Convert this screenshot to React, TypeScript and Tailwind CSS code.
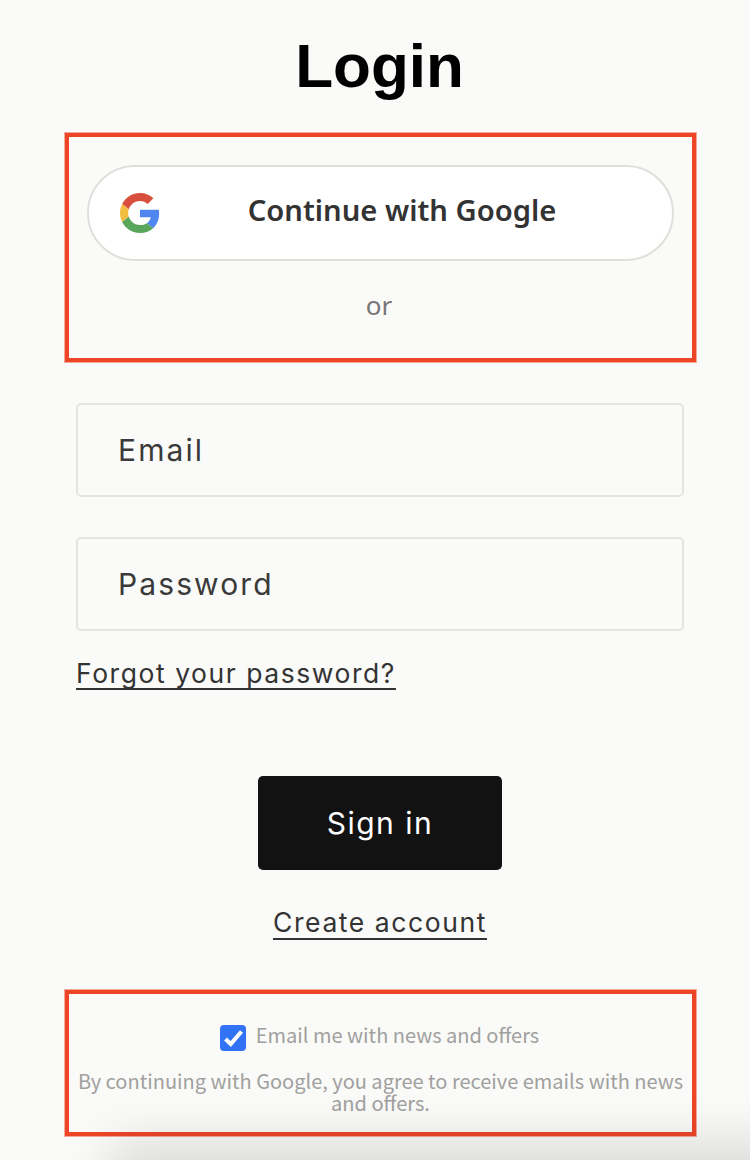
function GoogleLogo() {
  return (
    <svg width="40" height="40" viewBox="0 0 48 48" className="shrink-0">
      <path fill="#D94F3D" d="M24 9.5c3.54 0 6.71 1.22 9.21 3.6l6.85-6.85C35.9 2.38 30.47 0 24 0 14.62 0 6.51 5.38 2.56 13.22l7.98 6.19C12.43 13.72 17.74 9.5 24 9.5z" />
      <path fill="#5086F0" d="M46.98 24.55c0-1.57-.15-3.09-.38-4.55H24v9.02h12.94c-.58 2.96-2.26 5.48-4.78 7.18l7.73 6c4.51-4.18 7.09-10.36 7.09-17.65z" />
      <path fill="#F2BE42" d="M10.53 28.59c-.48-1.45-.76-2.99-.76-4.59s.27-3.14.76-4.59l-7.98-6.19C.92 16.46 0 20.12 0 24c0 3.88.92 7.54 2.56 10.78l7.97-6.19z" />
      <path fill="#58A65C" d="M24 48c6.48 0 11.93-2.13 15.89-5.81l-7.73-6c-2.15 1.45-4.92 2.3-8.16 2.3-6.26 0-11.57-4.22-13.47-9.91l-7.98 6.19C6.51 42.62 14.62 48 24 48z" />
    </svg>
  );
}

function Field({ label }: { label: string }) {
  return (
    <div className="flex h-[94px] items-center rounded-[5px] border-2 border-[#e4e4e1] pl-[40px] font-['Inter',sans-serif] text-[30px] tracking-[2.1px] text-[#3a3a3a]">
      {label}
    </div>
  );
}

export default function App() {
  return (
    <main className="relative h-[1160px] w-[750px] overflow-hidden bg-[#fafaf8] font-['Inter',sans-serif]">
      <h1 className="pt-[29px] pl-[9px] text-center font-['Liberation_Sans',sans-serif] text-[62px] leading-[73px] font-bold text-black">Login</h1>

      <section className="mx-[65px] mt-[31px] h-[229px] w-[631px] border-4 border-[#ee4527] px-[18px] pt-[28px] shadow-[0_0_0_1px_rgba(238,69,39,0.45)]">
        <button className="relative flex h-[96px] w-full items-center justify-center rounded-full border-2 border-[#dfdfdc] bg-white pb-[5px] pl-[43px] font-['Noto_Sans',sans-serif] text-[29.2px] font-semibold text-[#333333]">
          <span className="absolute top-[26px] left-[31px]">
            <GoogleLogo />
          </span>
          Continue with Google
        </button>
        <p className="mt-[27px] pr-[3px] text-center font-['Noto_Sans',sans-serif] text-[26px] leading-[34px] text-[#777777]">or</p>
      </section>

      <form className="mx-[76px] mt-[41px] flex w-[608px] flex-col">
        <Field label="Email" />
        <div className="mt-10">
          <Field label="Password" />
        </div>
        <a className="mt-[26px] self-start border-b-2 border-[#333333] pt-[2px] text-[26.5px] leading-[29px] tracking-[1.55px] text-[#333333]">Forgot your password?</a>
        <button className="mt-[86px] flex h-[94px] w-[244px] items-center justify-center self-center rounded-[5px] bg-[#121212] text-[30px] tracking-[1.5px] text-white">
          Sign in
        </button>
        <a className="mt-[35px] self-center border-b-2 border-[#333333] pt-[2px] text-[26.5px] leading-[31px] tracking-[1.57px] text-[#333333]">Create account</a>
      </form>

      <section className="mx-[65px] mt-[50px] flex h-[146px] w-[631px] flex-col items-center border-4 border-[#ee4527] pt-[25px] font-['Noto_Sans_CJK_KR',sans-serif] text-[#a0a09e] shadow-[0_0_0_1px_rgba(238,69,39,0.45)]">
        <label className="flex items-center gap-[10px] pr-[2px] text-[20px] leading-[32px]">
          <span className="flex h-[26px] w-[26px] items-center justify-center rounded-[4px] bg-[#3273f6]">
            <svg width="26" height="26" viewBox="0 0 26 26" fill="none">
              <path d="M5.5 14 L10.7 19 L21.5 6.5" stroke="white" strokeWidth="4" />
            </svg>
          </span>
          <span className="pb-[6px]">Email me with news and offers</span>
        </label>
        <p className="mt-[13px] text-center text-[20px] leading-[22px]">
          By continuing with Google, you agree to receive emails with news and offers.
        </p>
      </section>

      <div className="absolute top-[1160px] right-[-100px] left-[130px] h-[60px] shadow-[0_0_50px_20px_rgba(0,0,0,0.12)]" />
    </main>
  );
}
